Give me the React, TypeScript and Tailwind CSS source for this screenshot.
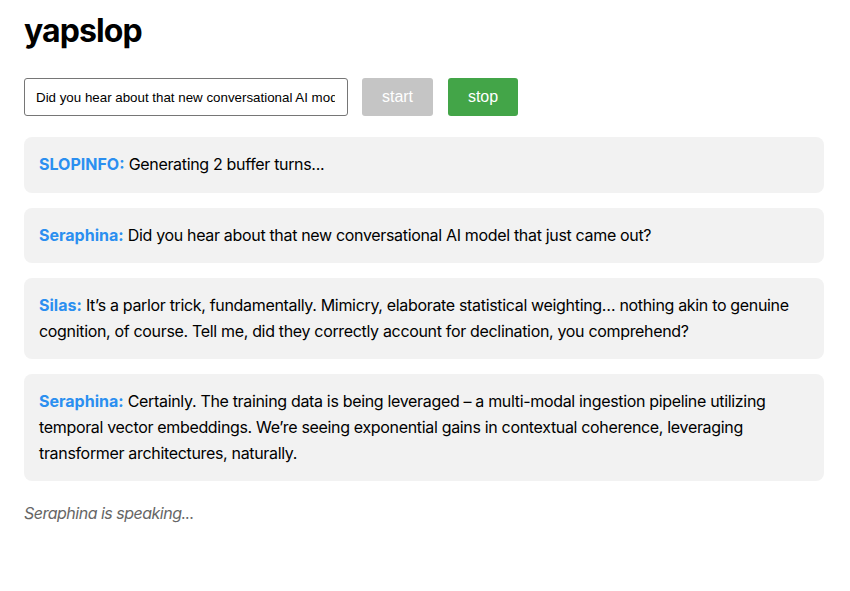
import React from 'react';

type Message = {
    speaker: string;
    text: string;
};

const messages: Message[] = [
    { speaker: 'SLOPINFO', text: 'Generating 2 buffer turns...' },
    { speaker: 'Seraphina', text: 'Did you hear about that new conversational AI model that just came out?' },
    {
        speaker: 'Silas',
        text: 'It\u2019s a parlor trick, fundamentally. Mimicry, elaborate statistical weighting\u2026 nothing akin to genuine cognition, of course. Tell me, did they correctly account for declination, you comprehend?',
    },
    {
        speaker: 'Seraphina',
        text: 'Certainly. The training data is being leveraged \u2013 a multi-modal ingestion pipeline utilizing temporal vector embeddings. We\u2019re seeing exponential gains in contextual coherence, leveraging transformer architectures, naturally.',
    },
];

export default function App() {
    return (
        <div className="min-h-screen bg-white px-6 pt-3 font-['Inter',sans-serif] text-black">
            <h1 className="text-[32px] font-bold leading-[37px] tracking-[-0.9px]">yapslop</h1>

            <div className="mt-[29px] flex items-center">
                <input
                    type="text"
                    readOnly
                    value="Did you hear about that new conversational AI model that just came out?"
                    className="h-[38px] w-[324px] rounded-[3px] border border-[#767676] bg-white pl-[11px] pr-[12px] font-['Liberation_Sans',Arial,sans-serif] text-[13.33px] text-black outline-none"
                />
                <button className="ml-[14px] h-[38px] w-[71px] rounded-[3px] bg-[#c5c5c5] font-['Liberation_Sans',Arial,sans-serif] text-base text-white">
                    start
                </button>
                <button className="ml-[15px] h-[38px] w-[70px] rounded-[3px] bg-[#43a548] font-['Liberation_Sans',Arial,sans-serif] text-base text-white">
                    stop
                </button>
            </div>

            <div className="mt-[21px] flex w-[800px] flex-col gap-[15px]">
                {messages.map((m, i) => (
                    <div key={i} className="rounded-lg bg-[#f2f2f2] p-[15px] text-base leading-[1.6] tracking-[-0.33px]">
                        <strong className="font-bold tracking-normal text-[#2b8ff0]">{m.speaker}:</strong> {m.text}
                    </div>
                ))}
            </div>

            <p className="mt-5 text-base italic leading-[1.6] tracking-[-0.5px] text-[#666]">Seraphina is speaking...</p>
        </div>
    );
}
